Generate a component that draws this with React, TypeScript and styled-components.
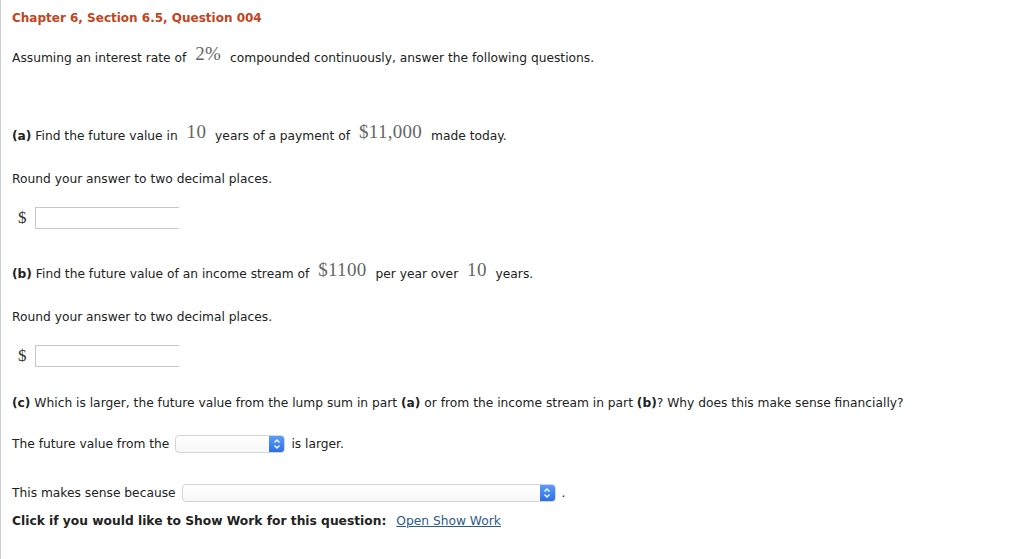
import { createGlobalStyle, styled } from "styled-components"

const Global = createGlobalStyle`
  html, body {
    margin: 0;
    padding: 0;
    background: #fff;
  }
  body {
    font-family: "DejaVu Sans", Verdana, sans-serif;
    font-size: 12.25px;
    color: #222;
  }
`

const Page = styled.div`
  min-height: 559px;
  box-sizing: border-box;
  border-left: 1px solid #c9ced6;
  padding: 9px 0 0 11px;
`

const Title = styled.h1`
  margin: 0;
  height: 18px;
  line-height: 18px;
  font-size: 12px;
  font-weight: bold;
  color: #c4441c;
`

const Line = styled.div<{ $top: number }>`
  margin-top: ${(p) => p.$top}px;
  height: 22px;
  line-height: 22px;
  display: flex;
  align-items: center;
  white-space: pre;
`

const Math = styled.span`
  font-family: "Liberation Serif", "Times New Roman", serif;
  font-size: 19px;
  color: #666;
  padding: 0 5px 9px 5px;
  letter-spacing: 0.3px;
`

const B = styled.b`
  font-weight: bold;
`

const Dollar = styled.span`
  font-family: "Liberation Serif", serif;
  font-size: 17px;
  color: #333;
  width: 23px;
  padding-left: 6px;
  box-sizing: border-box;
`

const Answer = styled.input`
  width: 144px;
  height: 22px;
  box-sizing: border-box;
  border: 1px solid #c8c8c8;
  border-right: none;
  outline: none;
  padding: 0 4px;
  font: inherit;
`

const Select = styled.div<{ $w: number }>`
  width: ${(p) => p.$w}px;
  height: 18px;
  box-sizing: border-box;
  border: 1px solid #d4d4d4;
  border-radius: 4px;
  background: linear-gradient(#fff, #f7f7f7);
  display: flex;
  justify-content: flex-end;
  overflow: hidden;
  margin: 0 6px 0 6px;
`

const Arrows = styled.div`
  width: 15px;
  height: 100%;
  background: linear-gradient(#5a9cf8, #2b6fe6);
  display: flex;
  align-items: center;
  justify-content: center;
`

const Link = styled.a`
  color: #2b5b8a;
  text-decoration: underline;
  margin-left: 10px;
  cursor: pointer;
`

function Chevrons() {
  return (
    <Arrows>
      <svg width="8" height="12" viewBox="0 0 8 12" fill="none" stroke="#fff" strokeWidth="1.3">
        <path d="M1.5 4.5 L4 2 L6.5 4.5" />
        <path d="M1.5 7.5 L4 10 L6.5 7.5" />
      </svg>
    </Arrows>
  )
}

export default function App() {
  return (
    <>
      <Global />
      <Page>
        <Title>Chapter 6, Section 6.5, Question 004</Title>
        <Line $top={20}>
          Assuming an interest rate of <Math>2%</Math> compounded continuously, answer the following questions.
        </Line>
        <Line $top={56}>
          <B>(a)</B> Find the future value in <Math>10</Math> years of a payment of <Math>$11,000</Math> made today.
        </Line>
        <Line $top={21}>Round your answer to two decimal places.</Line>
        <Line $top={17}>
          <Dollar>$</Dollar>
          <Answer />
        </Line>
        <Line $top={34}>
          <B>(b)</B> Find the future value of an income stream of <Math>$1100</Math> per year over <Math>10</Math> years.
        </Line>
        <Line $top={21}>Round your answer to two decimal places.</Line>
        <Line $top={17}>
          <Dollar>$</Dollar>
          <Answer />
        </Line>
        <Line $top={25}>
          <B>(c)</B> Which is larger, the future value from the lump sum in part <B>(a)</B> or from the income stream in part <B>(b)</B>? Why does this make sense financially?
        </Line>
        <Line $top={19}>
          The future value from the
          <Select $w={110}>
            <Chevrons />
          </Select>
          is larger.
        </Line>
        <Line $top={27}>
          This makes sense because
          <Select $w={374}>
            <Chevrons />
          </Select>
          .
        </Line>
        <Line $top={6}>
          <B>Click if you would like to Show Work for this question:</B>
          <Link>Open Show Work</Link>
        </Line>
      </Page>
    </>
  )
}
